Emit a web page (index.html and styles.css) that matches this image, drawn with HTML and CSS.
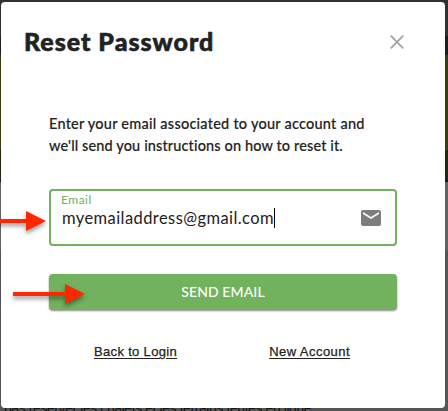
FILE: index.html
```html
<!DOCTYPE html>
<html lang="en">
<head>
    <meta charset="UTF-8">
    <meta name="viewport" content="width=device-width, initial-scale=1.0">
    <title>Reset Password</title>
    <link rel="stylesheet" href="styles.css">
</head>
<body>
    <p class="page-text">pas réserver les chalets et les terrains tentes en ligne.</p>

    <div class="modal">
        <div class="modal-header">
            <h1>Reset Password</h1>
            <button class="close-button" aria-label="Close">
                <svg width="14" height="14" viewBox="0 0 14 14"><path d="M.7 .7 13.3 13.3M13.3 .7 .7 13.3" stroke="#a3a3a3" stroke-width="1.8"/></svg>
            </button>
        </div>

        <div class="modal-content">
            <p class="intro">Enter your email associated to your account and<br><span class="line-two">we'll send you instructions on how to reset it.</span></p>

            <div class="field">
                <div class="field-text">
                    <span class="field-label">Email</span>
                    <div class="field-value"><span>myemailaddress@gmail.com</span><i class="caret"></i></div>
                </div>
                <svg class="mail-icon" width="24" height="24" viewBox="0 0 24 24"><path fill="#7d7d7d" d="M20 4H4c-1.100 0-2 .9-2 2v12c0 1.100.9 2 2 2h16c1.100 0 2-.9 2-2V6c0-1.100-.9-2-2-2zm0 4-8 5-8-5V6l8 5 8-5v2z"/></svg>
            </div>

            <button class="send-button">SEND EMAIL</button>

            <div class="links">
                <a href="#" class="link-back">Back to Login</a>
                <a href="#" class="link-new">New Account</a>
            </div>
        </div>
    </div>

    <svg class="arrow arrow-field" width="60" height="24" viewBox="0 0 60 24"><path fill="#ff2600" d="M0 10h40V2l20 10-20 10v-8H0z"/></svg>
    <svg class="arrow arrow-button" width="72" height="24" viewBox="0 0 72 24"><path fill="#ff2600" d="M0 10h52V2l20 10-20 10v-8H0z"/></svg>
</body>
</html>
```
FILE: styles.css
```css
body {
    margin: 0;
    padding: 2px 3px 3px 1px;
    width: 444px;
    height: 406px;
    position: relative;
    overflow: hidden;
    font-family: Lato, sans-serif;
    color: #222;
    background: linear-gradient(#302f31 0 36px, #1d1e1c 36px 55px, #3f3a0b 55px 150px, #28250c 150px 180px, #151512 180px 182px, #626263 182px 250px, #555556 250px 411px);
}
.page-text {
    position: absolute;
    left: 4px;
    top: 400px;
    margin: 0;
    font: 14px/16px "Liberation Sans", sans-serif;
    letter-spacing: -0.42px;
    color: #151515;
    white-space: nowrap;
}
.modal {
    position: relative;
    box-sizing: border-box;
    width: 444px;
    height: 406px;
    background: #fff;
    border-radius: 4px;
}
.modal-header {
    display: flex;
    justify-content: space-between;
    padding: 24px 41px 0 23px;
    height: 88px;
    box-sizing: border-box;
}
h1 {
    margin: 0;
    font-size: 25px;
    line-height: 30px;
    font-weight: 900;
    letter-spacing: 0.98px;
    -webkit-text-stroke: 0.6px #222;
    white-space: nowrap;
}
.close-button {
    display: flex;
    align-self: flex-start;
    margin-top: 9px;
    padding: 0;
    border: none;
    background: none;
}
.modal-content {
    padding: 23px 48px 0;
}
.intro {
    margin: 0 0 32px;
    font-size: 14.5px;
    line-height: 22px;
    font-weight: 500;
    letter-spacing: 0.24px;
    -webkit-text-stroke: 0.15px #222;
    white-space: nowrap;
}
.line-two {
    letter-spacing: 0.13px;
}
.field {
    display: flex;
    justify-content: space-between;
    box-sizing: border-box;
    height: 57px;
    padding: 2px 12px 0 10px;
    border: 2px solid #72b15e;
    border-radius: 4px;
}
.field-label {
    display: block;
    font-size: 12px;
    line-height: 14px;
    letter-spacing: 0.5px;
    color: #72b15e;
}
.field-value {
    display: flex;
    align-items: center;
    height: 21px;
    padding-left: 1px;
    font-size: 16.5px;
    letter-spacing: 0.42px;
}
.caret {
    width: 1px;
    height: 20px;
    background: #000;
}
.mail-icon {
    margin-top: 13px;
}
.send-button {
    display: block;
    width: 100%;
    height: 36px;
    margin-top: 28px;
    padding: 0;
    border: none;
    border-radius: 4px;
    background: #72b15e;
    box-shadow: 0 1px 2px rgba(0,0,0,0.45);
    color: #fff;
    font: 500 14px/36px Lato, sans-serif;
    letter-spacing: 0.1px;
}
.links {
    display: flex;
    justify-content: space-between;
    padding: 34px 47px 0 45px;
    font: 13px/16px "Liberation Sans", sans-serif;
}
.links a {
    color: #222;
    text-underline-offset: 2px;
    letter-spacing: 0.33px;
    -webkit-text-stroke: 0.25px #222;
}
.links .link-new {
    letter-spacing: 0.45px;
}
.arrow {
    position: absolute;
    filter: drop-shadow(0 3px 2px rgba(0,0,0,0.4));
}
.arrow-field {
    left: -14px;
    top: 209px;
}
.arrow-button {
    left: 13px;
    top: 282px;
}
```
